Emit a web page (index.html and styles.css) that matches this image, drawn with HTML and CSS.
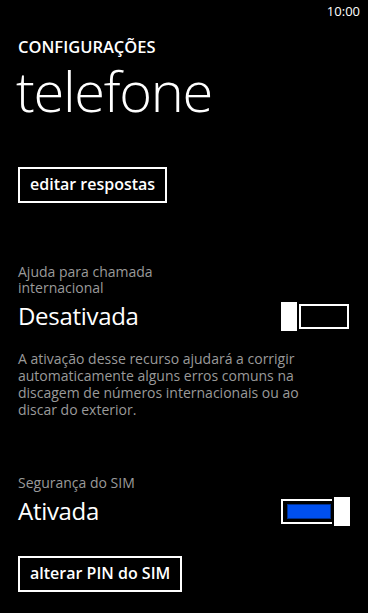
FILE: index.html
```html
<!DOCTYPE html>
<html>
<head lang="pt">
    <meta charset="UTF-8">
    <title>telefone</title>
    <link rel="stylesheet" href="styles.css">
</head>
<body>
<div class="status-bar">
    <span class="clock">10:00</span>
</div>
<div class="page">
    <div class="app-title">CONFIGURAÇÕES</div>
    <div class="page-title">telefone</div>

    <div class="section">
        <a class="btn" href="javascript:void(0)">editar respostas</a>
    </div>

    <div class="setting first">
        <div class="setting-label">Ajuda para chamada<br>internacional</div>
        <div class="setting-row">
            <span class="setting-value">Desativada</span>
            <span class="toggle">
                <span class="toggle-track"></span>
                <span class="toggle-thumb"></span>
            </span>
        </div>
    </div>
    <p class="setting-note">A ativação desse recurso ajudará a corrigir automaticamente alguns erros comuns na discagem de números internacionais ou ao discar do exterior.</p>

    <div class="setting">
        <div class="setting-label">Segurança do SIM</div>
        <div class="setting-row">
            <span class="setting-value">Ativada</span>
            <span class="toggle on">
                <span class="toggle-track"><span class="toggle-fill"></span></span>
                <span class="toggle-thumb"></span>
            </span>
        </div>
    </div>
    <div class="section last">
        <a class="btn" href="javascript:void(0)">alterar PIN do SIM</a>
    </div>
</div>
</body>
</html>
```

FILE: styles.css
```css
html, body{
    margin: 0;
    padding: 0;
    background: #000;
    color: #fff;
    font-family: "Open Sans", "Noto Sans", sans-serif;
}
.status-bar{
    height: 22px;
    display: flex;
    justify-content: flex-end;
    align-items: center;
    padding-right: 8px;
}
.clock{
    font-size: 13px;
    line-height: 22px;
}
.page{
    padding: 0 18px 0 18px;
}
.app-title{
    margin-top: 15px;
    font-size: 16.5px;
    font-weight: 600;
    line-height: 20px;
}
.page-title{
    margin-left: -2px;
    font-size: 56px;
    font-weight: 300;
    line-height: 66px;
    letter-spacing: -1.3px;
}
.section{
    margin-top: 44px;
}
.btn{
    display: inline-block;
    height: 32px;
    line-height: 31px;
    padding: 0 10px;
    border: 2px solid #fff;
    color: #fff;
    text-decoration: none;
    font-size: 16px;
    font-weight: 600;
}
.setting{
    margin-top: 57px;
}
.setting.first{
    margin-top: 61px;
}
.setting-label{
    color: #9a9a9a;
    font-size: 14px;
    line-height: 16px;
}
.setting-row{
    display: flex;
    justify-content: space-between;
    align-items: center;
    margin-top: 4px;
}
.setting-value{
    font-size: 24px;
    line-height: 32px;
    letter-spacing: -0.3px;
}
.toggle{
    position: relative;
    display: block;
    width: 69px;
    height: 29px;
}
.toggle-track{
    position: absolute;
    left: 18px;
    top: 2px;
    width: 46px;
    height: 21px;
    border: 2px solid #fff;
}
.toggle-thumb{
    position: absolute;
    left: 0;
    top: 0;
    width: 16px;
    height: 29px;
    background: #fff;
}
.toggle.on .toggle-track{
    left: 0;
    width: 49px;
    border-right: none;
}
.toggle.on .toggle-fill{
    position: absolute;
    left: 4px;
    top: 3px;
    right: 1px;
    bottom: 3px;
    background: #0050ef;
    border: 1px solid #00308f;
}
.toggle.on .toggle-thumb{
    left: 53px;
}
.setting-note{
    margin: 18px 0 0 0;
    max-width: 300px;
    color: #9a9a9a;
    font-size: 14px;
    line-height: 17px;
}
.section.last{
    margin-top: 29px;
}
```
